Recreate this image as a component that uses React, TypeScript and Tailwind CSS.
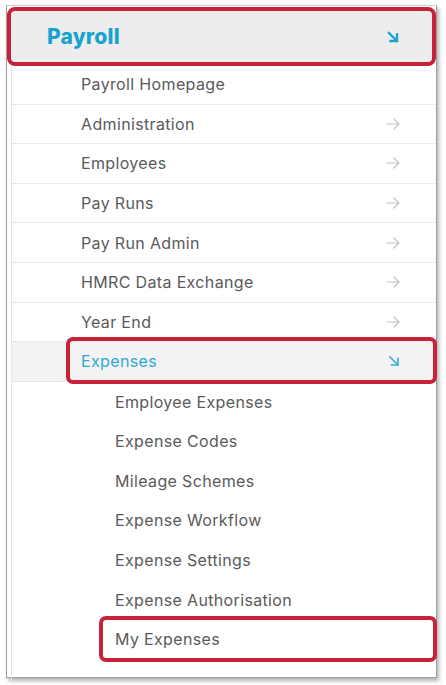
import React from "react";

function ArrowRight() {
  return (
    <svg width="14" height="12" viewBox="0 0 14 12" fill="none" stroke="#c2c2c2" strokeWidth="1.2" strokeLinecap="round" strokeLinejoin="round">
      <path d="M1 6 H13 M8 1 L13 6 L8 11" />
    </svg>
  );
}

function ArrowDiag({ bold }: { bold?: boolean }) {
  return (
    <svg width="12" height="12" viewBox="0 0 12 12" fill="none" stroke={bold ? "#1aa3d3" : "#3aaad6"} strokeWidth={bold ? 2.4 : 1.6} strokeLinecap="square">
      <path d="M2 2 L10 10 M10 3.5 V10 H3.5" />
    </svg>
  );
}

const level1 = [
  { t: "Payroll Homepage", arrow: false },
  { t: "Administration", arrow: true },
  { t: "Employees", arrow: true },
  { t: "Pay Runs", arrow: true },
  { t: "Pay Run Admin", arrow: true },
  { t: "HMRC Data Exchange", arrow: true },
  { t: "Year End", arrow: true },
];

const level2 = [
  "Employee Expenses",
  "Expense Codes",
  "Mileage Schemes",
  "Expense Workflow",
  "Expense Settings",
  "Expense Authorisation",
];

export default function App() {
  return (
    <div
      className="w-[446px] h-[685px] bg-white overflow-hidden"
      style={{ fontFamily: "Inter, 'Noto Sans', sans-serif" }}
    >
      <div className="ml-[6px] mt-[5px] w-[431px] h-[673px] border-l border-r border-b border-[#9e9e9e] border-t-[#d0d0d0] border-t bg-white shadow-[2px_3px_4px_rgba(0,0,0,0.3)] relative">
        <div className="pt-[1px]">
          <div className="h-[59px] rounded-[8px] border-[4px] border-[#c8213a] bg-[#ededed] flex items-center justify-between pl-[36px] pr-[33px]">
            <span className="text-[21px] font-extrabold text-[#18a2d0] tracking-[0.2px]">Payroll</span>
            <ArrowDiag bold />
          </div>
        </div>
        <div className="ml-[4px] -mt-[1px] border-l border-[#e6e6e6] h-[615px]">
          {level1.map((it) => (
            <div
              key={it.t}
              className="h-[39.6px] flex items-center justify-between pl-[69px] pr-[36px] border-b border-dotted border-[#d6d6d6] text-[16px] text-[#5a5a5a] tracking-[0.35px]"
            >
              <span>{it.t}</span>
              {it.arrow && <ArrowRight />}
            </div>
          ))}
          <div className="relative h-[39.6px] flex items-center justify-between pl-[69px] pr-[36px] bg-[#f3f3f3] border-b border-dotted border-[#d6d6d6] text-[16px] text-[#2fa8d6] tracking-[0.35px]">
            <span>Expenses</span>
            <ArrowDiag />
            <div className="absolute left-[54px] right-[-1px] top-[-5px] h-[47px] rounded-[7px] border-[4px] border-[#c8213a]" />
          </div>
          {level2.map((t) => (
            <div
              key={t}
              className="h-[39.6px] flex items-center pl-[103px] text-[16px] text-[#5a5a5a] tracking-[0.35px]"
            >
              <span>{t}</span>
            </div>
          ))}
          <div className="relative h-[39.6px] flex items-center pl-[103px] text-[16px] text-[#5a5a5a] tracking-[0.35px]">
            <span>My Expenses</span>
            <div className="absolute left-[87px] right-[-1px] top-[-3px] h-[46px] rounded-[7px] border-[4px] border-[#c8213a]" />
          </div>
        </div>
      </div>
    </div>
  );
}
